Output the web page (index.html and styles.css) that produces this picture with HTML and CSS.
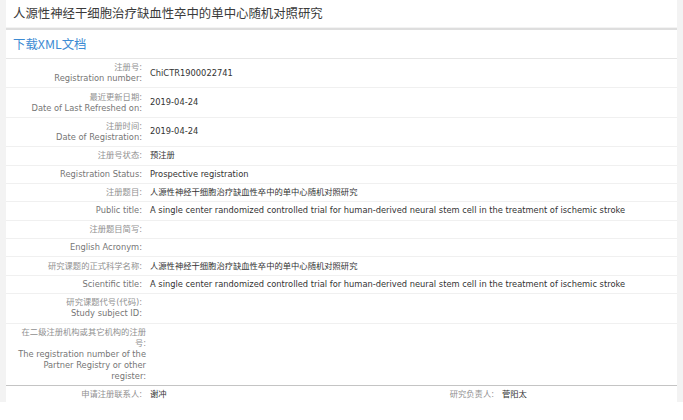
FILE: index.html
```html
<!DOCTYPE html>
<html lang="zh-CN">
<head>
<meta charset="utf-8">
<title>人源性神经干细胞治疗缺血性卒中的单中心随机对照研究</title>
<link rel="stylesheet" href="styles.css">
</head>
<body>
<div class="page">
  <div class="panel">
    <div class="title">人源性神经干细胞治疗缺血性卒中的单中心随机对照研究</div>
    <div class="download"><a class="xml-link">下载XML文档</a></div>
    <div class="rows">
      <div class="row">
        <div class="lab"><span class="cn">注册号:</span><span class="en">Registration number:</span></div>
        <div class="val">ChiCTR1900022741</div>
      </div>
      <div class="row">
        <div class="lab"><span class="cn">最近更新日期:</span><span class="en">Date of Last Refreshed on:</span></div>
        <div class="val">2019-04-24</div>
      </div>
      <div class="row">
        <div class="lab"><span class="cn">注册时间:</span><span class="en">Date of Registration:</span></div>
        <div class="val">2019-04-24</div>
      </div>
      <div class="row">
        <div class="lab cn-lab">注册号状态:</div>
        <div class="val">预注册</div>
      </div>
      <div class="row">
        <div class="lab">Registration Status:</div>
        <div class="val">Prospective registration</div>
      </div>
      <div class="row">
        <div class="lab cn-lab">注册题目:</div>
        <div class="val">人源性神经干细胞治疗缺血性卒中的单中心随机对照研究</div>
      </div>
      <div class="row">
        <div class="lab">Public title:</div>
        <div class="val">A single center randomized controlled trial for human-derived neural stem cell in the treatment of ischemic stroke</div>
      </div>
      <div class="row">
        <div class="lab cn-lab">注册题目简写:</div>
        <div class="val"></div>
      </div>
      <div class="row">
        <div class="lab">English Acronym:</div>
        <div class="val"></div>
      </div>
      <div class="row">
        <div class="lab cn-lab">研究课题的正式科学名称:</div>
        <div class="val">人源性神经干细胞治疗缺血性卒中的单中心随机对照研究</div>
      </div>
      <div class="row">
        <div class="lab">Scientific title:</div>
        <div class="val">A single center randomized controlled trial for human-derived neural stem cell in the treatment of ischemic stroke</div>
      </div>
      <div class="row">
        <div class="lab"><span class="cn">研究课题代号(代码):</span><span class="en">Study subject ID:</span></div>
        <div class="val"></div>
      </div>
      <div class="row row-last">
        <div class="lab lab-wrap"><span class="cn">在二级注册机构或其它机构的注册<br>号:</span><span class="en">The registration number of the<br>Partner Registry or other<br>register:</span></div>
        <div class="val"></div>
      </div>
      <div class="row row-quad">
        <div class="lab cn-lab">申请注册联系人:</div>
        <div class="val">谢冲</div>
        <div class="lab cn-lab">研究负责人:</div>
        <div class="val">菅阳太</div>
      </div>
    </div>
  </div>
</div>
</body>
</html>
```
FILE: styles.css
```css
html, body {
  margin: 0;
  padding: 0;
  background: #ffffff;
}

body {
  font-family: "DejaVu Sans", "Noto Sans CJK SC", sans-serif;
}

.page {
  background: #f3f3f3;
  padding: 0 6px;
  height: 402px;
  overflow: hidden;
}

.panel {
  background: #ffffff;
}

.title {
  height: 27px;
  line-height: 27px;
  padding-left: 7px;
  font-family: "Noto Sans CJK SC", sans-serif;
  font-size: 12.4px;
  color: #3a3a3a;
  border-bottom: 1px solid #f3f3f3;
}

.download {
  height: 28px;
  line-height: 28px;
  padding-left: 7px;
  border-top: 2px solid #dedede;
  border-bottom: 1px solid #e6e6e6;
}

.xml-link {
  font-family: "Noto Sans CJK SC", sans-serif;
  font-size: 12.4px;
  color: #3d8bd3;
  text-decoration: none;
}

.rows {
  font-size: 8.3px;
  line-height: 11px;
}

.row {
  display: grid;
  grid-template-columns: 141px 1fr;
  align-items: center;
  padding: 3.2px 0;
  border-bottom: 1px solid #f0f0f0;
}

.lab {
  text-align: right;
  padding-right: 5px;
  color: #767676;
}

.lab span {
  display: block;
}

.cn,
.cn-lab {
  color: #909090;
}

.val {
  padding-left: 3px;
  color: #333333;
  white-space: nowrap;
}

.lab-wrap {
  padding-right: 1px;
}

.row-last {
  border-bottom: 1px solid #c4c4c4;
}

.row-quad {
  grid-template-columns: 141px 200px 152px 1fr;
  border-bottom: none;
}

.row-quad .val:last-child {
  padding-left: 3px;
}
```
